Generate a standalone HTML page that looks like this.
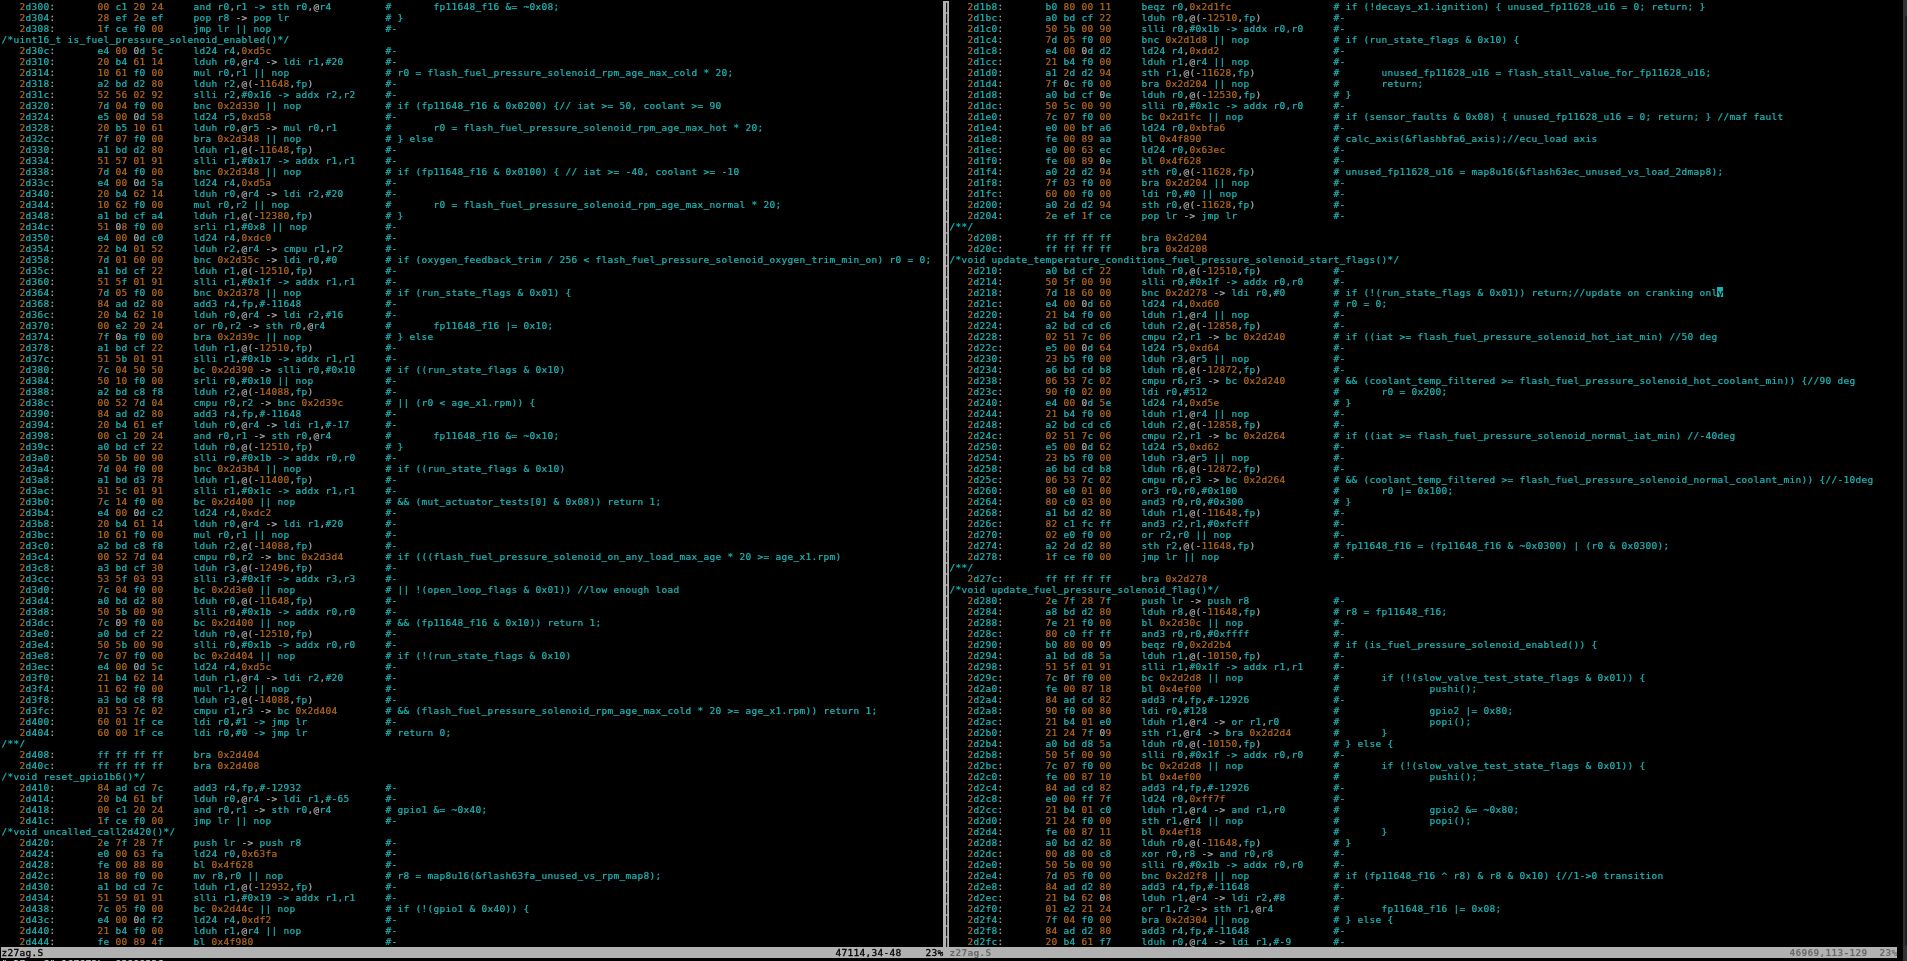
<!DOCTYPE html>
<html><head><meta charset="utf-8"><title>z27ag.S - vim</title>
<style>
html,body{margin:0;padding:0;background:#000;}
body{width:1907px;height:961px;overflow:hidden;position:relative;
 font-family:"DejaVu Sans Mono","Liberation Mono",monospace;font-size:9.5000px;letter-spacing:0.2805px;line-height:11px;color:#b2b2b2;}
.l{-webkit-text-stroke:0.2px currentColor;position:absolute;height:11px;white-space:pre;margin-left:0.5px;margin-top:0.0px}
i{font-style:normal}
.c{color:#19b9b9}.o{color:#b76b19}.g{color:#ababab}
.cur{color:#000}
.cb{position:absolute;width:6px;height:10px;background:#18b2b2}
.sep{position:absolute;left:943px;top:1px;width:6px;height:946px;background:#b2b2b2;color:#000}
.st{position:absolute;top:947px;height:11px;background:#b2b2b2;}
.st .l{top:0;color:#000;-webkit-text-stroke:0.3px #000}
.sep .l{-webkit-text-stroke:0.3px #000;margin-left:0.65px}
.st2 .l{color:#686868;font-weight:bold;-webkit-text-stroke:0}
.edge{position:absolute;left:1903px;top:0;width:4px;height:961px;background:#323232}
.thumb{position:absolute;left:1905px;top:16px;width:4px;height:930px;background:#1f1f1f;border-radius:2px}
#w{position:absolute;left:0;top:0;width:1907px;height:961px;will-change:transform}
</style></head><body><div id="w">
<div class="l" style="left:19px;top:1px"><i class="o">2</i><i class="c">d300</i><i class="g">:</i></div>
<div class="l" style="left:97px;top:1px"><i class="o">00 </i><i class="c">c1 </i><i class="o">20 24</i></div>
<div class="l" style="left:193px;top:1px"><i class="c">and r0</i><i class="g">,</i><i class="c">r1 -&gt; sth r0</i><i class="g">,@</i><i class="c">r4</i></div>
<div class="l" style="left:385px;top:1px"><i class="c">#       fp11648_f16 &amp;= ~0x08;</i></div>
<div class="l" style="left:19px;top:12px"><i class="o">2</i><i class="c">d304</i><i class="g">:</i></div>
<div class="l" style="left:97px;top:12px"><i class="o">28 </i><i class="c">ef </i><i class="o">2</i><i class="c">e ef</i></div>
<div class="l" style="left:193px;top:12px"><i class="c">pop r8 </i><i class="g">-&gt; </i><i class="c">pop lr</i></div>
<div class="l" style="left:385px;top:12px"><i class="c"># }</i></div>
<div class="l" style="left:19px;top:23px"><i class="o">2</i><i class="c">d308</i><i class="g">:</i></div>
<div class="l" style="left:97px;top:23px"><i class="o">1</i><i class="c">f ce f0 </i><i class="o">00</i></div>
<div class="l" style="left:193px;top:23px"><i class="c">jmp lr || nop</i></div>
<div class="l" style="left:385px;top:23px"><i class="c">#-</i></div>
<div class="l" style="left:1px;top:34px"><i class="c">/*uint16_t is_fuel_pressure_solenoid_enabled()*/</i></div>
<div class="l" style="left:19px;top:45px"><i class="o">2</i><i class="c">d30c</i><i class="g">:</i></div>
<div class="l" style="left:97px;top:45px"><i class="c">e4 </i><i class="o">00 </i><i class="g">0</i><i class="c">d </i><i class="o">5</i><i class="c">c</i></div>
<div class="l" style="left:193px;top:45px"><i class="c">ld24 r4</i><i class="g">,</i><i class="o">0xd5c</i></div>
<div class="l" style="left:385px;top:45px"><i class="c">#-</i></div>
<div class="l" style="left:19px;top:56px"><i class="o">2</i><i class="c">d310</i><i class="g">:</i></div>
<div class="l" style="left:97px;top:56px"><i class="o">20 </i><i class="c">b4 </i><i class="o">61 14</i></div>
<div class="l" style="left:193px;top:56px"><i class="c">lduh r0</i><i class="g">,@</i><i class="c">r4 </i><i class="g">-&gt; </i><i class="c">ldi r1</i><i class="g">,</i><i class="c">#20</i></div>
<div class="l" style="left:385px;top:56px"><i class="c">#-</i></div>
<div class="l" style="left:19px;top:67px"><i class="o">2</i><i class="c">d314</i><i class="g">:</i></div>
<div class="l" style="left:97px;top:67px"><i class="o">10 61 </i><i class="c">f0 </i><i class="o">00</i></div>
<div class="l" style="left:193px;top:67px"><i class="c">mul r0</i><i class="g">,</i><i class="c">r1 || nop</i></div>
<div class="l" style="left:385px;top:67px"><i class="c"># r0 = flash_fuel_pressure_solenoid_rpm_age_max_cold * 20;</i></div>
<div class="l" style="left:19px;top:78px"><i class="o">2</i><i class="c">d318</i><i class="g">:</i></div>
<div class="l" style="left:97px;top:78px"><i class="c">a2 bd d2 </i><i class="o">80</i></div>
<div class="l" style="left:193px;top:78px"><i class="c">lduh r2</i><i class="g">,@(-</i><i class="o">11648</i><i class="g">,</i><i class="c">fp</i><i class="g">)</i></div>
<div class="l" style="left:385px;top:78px"><i class="c">#-</i></div>
<div class="l" style="left:19px;top:89px"><i class="o">2</i><i class="c">d31c</i><i class="g">:</i></div>
<div class="l" style="left:97px;top:89px"><i class="o">52 56 02 92</i></div>
<div class="l" style="left:193px;top:89px"><i class="c">slli r2</i><i class="g">,</i><i class="c">#0x16 -&gt; addx r2,r2</i></div>
<div class="l" style="left:385px;top:89px"><i class="c">#-</i></div>
<div class="l" style="left:19px;top:100px"><i class="o">2</i><i class="c">d320</i><i class="g">:</i></div>
<div class="l" style="left:97px;top:100px"><i class="o">7</i><i class="c">d </i><i class="o">04 </i><i class="c">f0 </i><i class="o">00</i></div>
<div class="l" style="left:193px;top:100px"><i class="c">bnc </i><i class="o">0x2d330 </i><i class="c">|| nop</i></div>
<div class="l" style="left:385px;top:100px"><i class="c"># if (fp11648_f16 &amp; 0x0200) {// iat &gt;= 50, coolant &gt;= 90</i></div>
<div class="l" style="left:19px;top:111px"><i class="o">2</i><i class="c">d324</i><i class="g">:</i></div>
<div class="l" style="left:97px;top:111px"><i class="c">e5 </i><i class="o">00 </i><i class="g">0</i><i class="c">d </i><i class="o">58</i></div>
<div class="l" style="left:193px;top:111px"><i class="c">ld24 r5</i><i class="g">,</i><i class="o">0xd58</i></div>
<div class="l" style="left:385px;top:111px"><i class="c">#-</i></div>
<div class="l" style="left:19px;top:122px"><i class="o">2</i><i class="c">d328</i><i class="g">:</i></div>
<div class="l" style="left:97px;top:122px"><i class="o">20 </i><i class="c">b5 </i><i class="o">10 61</i></div>
<div class="l" style="left:193px;top:122px"><i class="c">lduh r0</i><i class="g">,@</i><i class="c">r5 </i><i class="g">-&gt; </i><i class="c">mul r0</i><i class="g">,</i><i class="c">r1</i></div>
<div class="l" style="left:385px;top:122px"><i class="c">#       r0 = flash_fuel_pressure_solenoid_rpm_age_max_hot * 20;</i></div>
<div class="l" style="left:19px;top:133px"><i class="o">2</i><i class="c">d32c</i><i class="g">:</i></div>
<div class="l" style="left:97px;top:133px"><i class="o">7</i><i class="c">f </i><i class="o">07 </i><i class="c">f0 </i><i class="o">00</i></div>
<div class="l" style="left:193px;top:133px"><i class="c">bra </i><i class="o">0x2d348 </i><i class="c">|| nop</i></div>
<div class="l" style="left:385px;top:133px"><i class="c"># } else</i></div>
<div class="l" style="left:19px;top:144px"><i class="o">2</i><i class="c">d330</i><i class="g">:</i></div>
<div class="l" style="left:97px;top:144px"><i class="c">a1 bd d2 </i><i class="o">80</i></div>
<div class="l" style="left:193px;top:144px"><i class="c">lduh r1</i><i class="g">,@(-</i><i class="o">11648</i><i class="g">,</i><i class="c">fp</i><i class="g">)</i></div>
<div class="l" style="left:385px;top:144px"><i class="c">#-</i></div>
<div class="l" style="left:19px;top:155px"><i class="o">2</i><i class="c">d334</i><i class="g">:</i></div>
<div class="l" style="left:97px;top:155px"><i class="o">51 57 01 91</i></div>
<div class="l" style="left:193px;top:155px"><i class="c">slli r1</i><i class="g">,</i><i class="c">#0x17 -&gt; addx r1,r1</i></div>
<div class="l" style="left:385px;top:155px"><i class="c">#-</i></div>
<div class="l" style="left:19px;top:166px"><i class="o">2</i><i class="c">d338</i><i class="g">:</i></div>
<div class="l" style="left:97px;top:166px"><i class="o">7</i><i class="c">d </i><i class="o">04 </i><i class="c">f0 </i><i class="o">00</i></div>
<div class="l" style="left:193px;top:166px"><i class="c">bnc </i><i class="o">0x2d348 </i><i class="c">|| nop</i></div>
<div class="l" style="left:385px;top:166px"><i class="c"># if (fp11648_f16 &amp; 0x0100) { // iat &gt;= -40, coolant &gt;= -10</i></div>
<div class="l" style="left:19px;top:177px"><i class="o">2</i><i class="c">d33c</i><i class="g">:</i></div>
<div class="l" style="left:97px;top:177px"><i class="c">e4 </i><i class="o">00 </i><i class="g">0</i><i class="c">d </i><i class="o">5</i><i class="c">a</i></div>
<div class="l" style="left:193px;top:177px"><i class="c">ld24 r4</i><i class="g">,</i><i class="o">0xd5a</i></div>
<div class="l" style="left:385px;top:177px"><i class="c">#-</i></div>
<div class="l" style="left:19px;top:188px"><i class="o">2</i><i class="c">d340</i><i class="g">:</i></div>
<div class="l" style="left:97px;top:188px"><i class="o">20 </i><i class="c">b4 </i><i class="o">62 14</i></div>
<div class="l" style="left:193px;top:188px"><i class="c">lduh r0</i><i class="g">,@</i><i class="c">r4 </i><i class="g">-&gt; </i><i class="c">ldi r2</i><i class="g">,</i><i class="c">#20</i></div>
<div class="l" style="left:385px;top:188px"><i class="c">#-</i></div>
<div class="l" style="left:19px;top:199px"><i class="o">2</i><i class="c">d344</i><i class="g">:</i></div>
<div class="l" style="left:97px;top:199px"><i class="o">10 62 </i><i class="c">f0 </i><i class="o">00</i></div>
<div class="l" style="left:193px;top:199px"><i class="c">mul r0</i><i class="g">,</i><i class="c">r2 || nop</i></div>
<div class="l" style="left:385px;top:199px"><i class="c">#       r0 = flash_fuel_pressure_solenoid_rpm_age_max_normal * 20;</i></div>
<div class="l" style="left:19px;top:210px"><i class="o">2</i><i class="c">d348</i><i class="g">:</i></div>
<div class="l" style="left:97px;top:210px"><i class="c">a1 bd cf a4</i></div>
<div class="l" style="left:193px;top:210px"><i class="c">lduh r1</i><i class="g">,@(-</i><i class="o">12380</i><i class="g">,</i><i class="c">fp</i><i class="g">)</i></div>
<div class="l" style="left:385px;top:210px"><i class="c"># }</i></div>
<div class="l" style="left:19px;top:221px"><i class="o">2</i><i class="c">d34c</i><i class="g">:</i></div>
<div class="l" style="left:97px;top:221px"><i class="o">51 </i><i class="g">0</i><i class="o">8 </i><i class="c">f0 </i><i class="o">00</i></div>
<div class="l" style="left:193px;top:221px"><i class="c">srli r1</i><i class="g">,</i><i class="c">#0x8 || nop</i></div>
<div class="l" style="left:385px;top:221px"><i class="c">#-</i></div>
<div class="l" style="left:19px;top:232px"><i class="o">2</i><i class="c">d350</i><i class="g">:</i></div>
<div class="l" style="left:97px;top:232px"><i class="c">e4 </i><i class="o">00 </i><i class="g">0</i><i class="c">d c0</i></div>
<div class="l" style="left:193px;top:232px"><i class="c">ld24 r4</i><i class="g">,</i><i class="o">0xdc0</i></div>
<div class="l" style="left:385px;top:232px"><i class="c">#-</i></div>
<div class="l" style="left:19px;top:243px"><i class="o">2</i><i class="c">d354</i><i class="g">:</i></div>
<div class="l" style="left:97px;top:243px"><i class="o">22 </i><i class="c">b4 </i><i class="o">01 52</i></div>
<div class="l" style="left:193px;top:243px"><i class="c">lduh r2</i><i class="g">,@</i><i class="c">r4 </i><i class="g">-&gt; </i><i class="c">cmpu r1</i><i class="g">,</i><i class="c">r2</i></div>
<div class="l" style="left:385px;top:243px"><i class="c">#-</i></div>
<div class="l" style="left:19px;top:254px"><i class="o">2</i><i class="c">d358</i><i class="g">:</i></div>
<div class="l" style="left:97px;top:254px"><i class="o">7</i><i class="c">d </i><i class="o">01 60 00</i></div>
<div class="l" style="left:193px;top:254px"><i class="c">bnc </i><i class="o">0x2d35c </i><i class="g">-&gt; </i><i class="c">ldi r0</i><i class="g">,</i><i class="c">#0</i></div>
<div class="l" style="left:385px;top:254px"><i class="c"># if (oxygen_feedback_trim / 256 &lt; flash_fuel_pressure_solenoid_oxygen_trim_min_on) r0 = 0;</i></div>
<div class="l" style="left:19px;top:265px"><i class="o">2</i><i class="c">d35c</i><i class="g">:</i></div>
<div class="l" style="left:97px;top:265px"><i class="c">a1 bd cf </i><i class="o">22</i></div>
<div class="l" style="left:193px;top:265px"><i class="c">lduh r1</i><i class="g">,@(-</i><i class="o">12510</i><i class="g">,</i><i class="c">fp</i><i class="g">)</i></div>
<div class="l" style="left:385px;top:265px"><i class="c">#-</i></div>
<div class="l" style="left:19px;top:276px"><i class="o">2</i><i class="c">d360</i><i class="g">:</i></div>
<div class="l" style="left:97px;top:276px"><i class="o">51 5</i><i class="c">f </i><i class="o">01 91</i></div>
<div class="l" style="left:193px;top:276px"><i class="c">slli r1</i><i class="g">,</i><i class="c">#0x1f -&gt; addx r1,r1</i></div>
<div class="l" style="left:385px;top:276px"><i class="c">#-</i></div>
<div class="l" style="left:19px;top:287px"><i class="o">2</i><i class="c">d364</i><i class="g">:</i></div>
<div class="l" style="left:97px;top:287px"><i class="o">7</i><i class="c">d </i><i class="o">05 </i><i class="c">f0 </i><i class="o">00</i></div>
<div class="l" style="left:193px;top:287px"><i class="c">bnc </i><i class="o">0x2d378 </i><i class="c">|| nop</i></div>
<div class="l" style="left:385px;top:287px"><i class="c"># if (run_state_flags &amp; 0x01) {</i></div>
<div class="l" style="left:19px;top:298px"><i class="o">2</i><i class="c">d368</i><i class="g">:</i></div>
<div class="l" style="left:97px;top:298px"><i class="o">84 </i><i class="c">ad d2 </i><i class="o">80</i></div>
<div class="l" style="left:193px;top:298px"><i class="c">add3 r4</i><i class="g">,</i><i class="c">fp</i><i class="g">,</i><i class="c">#-11648</i></div>
<div class="l" style="left:385px;top:298px"><i class="c">#-</i></div>
<div class="l" style="left:19px;top:309px"><i class="o">2</i><i class="c">d36c</i><i class="g">:</i></div>
<div class="l" style="left:97px;top:309px"><i class="o">20 </i><i class="c">b4 </i><i class="o">62 10</i></div>
<div class="l" style="left:193px;top:309px"><i class="c">lduh r0</i><i class="g">,@</i><i class="c">r4 </i><i class="g">-&gt; </i><i class="c">ldi r2</i><i class="g">,</i><i class="c">#16</i></div>
<div class="l" style="left:385px;top:309px"><i class="c">#-</i></div>
<div class="l" style="left:19px;top:320px"><i class="o">2</i><i class="c">d370</i><i class="g">:</i></div>
<div class="l" style="left:97px;top:320px"><i class="o">00 </i><i class="c">e2 </i><i class="o">20 24</i></div>
<div class="l" style="left:193px;top:320px"><i class="c">or r0</i><i class="g">,</i><i class="c">r2 </i><i class="g">-&gt; </i><i class="c">sth r0</i><i class="g">,@</i><i class="c">r4</i></div>
<div class="l" style="left:385px;top:320px"><i class="c">#       fp11648_f16 |= 0x10;</i></div>
<div class="l" style="left:19px;top:331px"><i class="o">2</i><i class="c">d374</i><i class="g">:</i></div>
<div class="l" style="left:97px;top:331px"><i class="o">7</i><i class="c">f </i><i class="g">0</i><i class="c">a f0 </i><i class="o">00</i></div>
<div class="l" style="left:193px;top:331px"><i class="c">bra </i><i class="o">0x2d39c </i><i class="c">|| nop</i></div>
<div class="l" style="left:385px;top:331px"><i class="c"># } else</i></div>
<div class="l" style="left:19px;top:342px"><i class="o">2</i><i class="c">d378</i><i class="g">:</i></div>
<div class="l" style="left:97px;top:342px"><i class="c">a1 bd cf </i><i class="o">22</i></div>
<div class="l" style="left:193px;top:342px"><i class="c">lduh r1</i><i class="g">,@(-</i><i class="o">12510</i><i class="g">,</i><i class="c">fp</i><i class="g">)</i></div>
<div class="l" style="left:385px;top:342px"><i class="c">#-</i></div>
<div class="l" style="left:19px;top:353px"><i class="o">2</i><i class="c">d37c</i><i class="g">:</i></div>
<div class="l" style="left:97px;top:353px"><i class="o">51 5</i><i class="c">b </i><i class="o">01 91</i></div>
<div class="l" style="left:193px;top:353px"><i class="c">slli r1</i><i class="g">,</i><i class="c">#0x1b -&gt; addx r1,r1</i></div>
<div class="l" style="left:385px;top:353px"><i class="c">#-</i></div>
<div class="l" style="left:19px;top:364px"><i class="o">2</i><i class="c">d380</i><i class="g">:</i></div>
<div class="l" style="left:97px;top:364px"><i class="o">7</i><i class="c">c </i><i class="o">04 50 50</i></div>
<div class="l" style="left:193px;top:364px"><i class="c">bc </i><i class="o">0x2d390 </i><i class="g">-&gt; </i><i class="c">slli r0</i><i class="g">,</i><i class="c">#0x10</i></div>
<div class="l" style="left:385px;top:364px"><i class="c"># if ((run_state_flags &amp; 0x10)</i></div>
<div class="l" style="left:19px;top:375px"><i class="o">2</i><i class="c">d384</i><i class="g">:</i></div>
<div class="l" style="left:97px;top:375px"><i class="o">50 10 </i><i class="c">f0 </i><i class="o">00</i></div>
<div class="l" style="left:193px;top:375px"><i class="c">srli r0</i><i class="g">,</i><i class="c">#0x10 || nop</i></div>
<div class="l" style="left:385px;top:375px"><i class="c">#-</i></div>
<div class="l" style="left:19px;top:386px"><i class="o">2</i><i class="c">d388</i><i class="g">:</i></div>
<div class="l" style="left:97px;top:386px"><i class="c">a2 bd c8 f8</i></div>
<div class="l" style="left:193px;top:386px"><i class="c">lduh r2</i><i class="g">,@(-</i><i class="o">14088</i><i class="g">,</i><i class="c">fp</i><i class="g">)</i></div>
<div class="l" style="left:385px;top:386px"><i class="c">#-</i></div>
<div class="l" style="left:19px;top:397px"><i class="o">2</i><i class="c">d38c</i><i class="g">:</i></div>
<div class="l" style="left:97px;top:397px"><i class="o">00 52 7</i><i class="c">d </i><i class="o">04</i></div>
<div class="l" style="left:193px;top:397px"><i class="c">cmpu r0</i><i class="g">,</i><i class="c">r2 </i><i class="g">-&gt; </i><i class="c">bnc </i><i class="o">0x2d39c</i></div>
<div class="l" style="left:385px;top:397px"><i class="c"># || (r0 &lt; age_x1.rpm)) {</i></div>
<div class="l" style="left:19px;top:408px"><i class="o">2</i><i class="c">d390</i><i class="g">:</i></div>
<div class="l" style="left:97px;top:408px"><i class="o">84 </i><i class="c">ad d2 </i><i class="o">80</i></div>
<div class="l" style="left:193px;top:408px"><i class="c">add3 r4</i><i class="g">,</i><i class="c">fp</i><i class="g">,</i><i class="c">#-11648</i></div>
<div class="l" style="left:385px;top:408px"><i class="c">#-</i></div>
<div class="l" style="left:19px;top:419px"><i class="o">2</i><i class="c">d394</i><i class="g">:</i></div>
<div class="l" style="left:97px;top:419px"><i class="o">20 </i><i class="c">b4 </i><i class="o">61 </i><i class="c">ef</i></div>
<div class="l" style="left:193px;top:419px"><i class="c">lduh r0</i><i class="g">,@</i><i class="c">r4 </i><i class="g">-&gt; </i><i class="c">ldi r1</i><i class="g">,</i><i class="c">#-17</i></div>
<div class="l" style="left:385px;top:419px"><i class="c">#-</i></div>
<div class="l" style="left:19px;top:430px"><i class="o">2</i><i class="c">d398</i><i class="g">:</i></div>
<div class="l" style="left:97px;top:430px"><i class="o">00 </i><i class="c">c1 </i><i class="o">20 24</i></div>
<div class="l" style="left:193px;top:430px"><i class="c">and r0</i><i class="g">,</i><i class="c">r1 </i><i class="g">-&gt; </i><i class="c">sth r0</i><i class="g">,@</i><i class="c">r4</i></div>
<div class="l" style="left:385px;top:430px"><i class="c">#       fp11648_f16 &amp;= ~0x10;</i></div>
<div class="l" style="left:19px;top:441px"><i class="o">2</i><i class="c">d39c</i><i class="g">:</i></div>
<div class="l" style="left:97px;top:441px"><i class="c">a0 bd cf </i><i class="o">22</i></div>
<div class="l" style="left:193px;top:441px"><i class="c">lduh r0</i><i class="g">,@(-</i><i class="o">12510</i><i class="g">,</i><i class="c">fp</i><i class="g">)</i></div>
<div class="l" style="left:385px;top:441px"><i class="c"># }</i></div>
<div class="l" style="left:19px;top:452px"><i class="o">2</i><i class="c">d3a0</i><i class="g">:</i></div>
<div class="l" style="left:97px;top:452px"><i class="o">50 5</i><i class="c">b </i><i class="o">00 90</i></div>
<div class="l" style="left:193px;top:452px"><i class="c">slli r0</i><i class="g">,</i><i class="c">#0x1b -&gt; addx r0,r0</i></div>
<div class="l" style="left:385px;top:452px"><i class="c">#-</i></div>
<div class="l" style="left:19px;top:463px"><i class="o">2</i><i class="c">d3a4</i><i class="g">:</i></div>
<div class="l" style="left:97px;top:463px"><i class="o">7</i><i class="c">d </i><i class="o">04 </i><i class="c">f0 </i><i class="o">00</i></div>
<div class="l" style="left:193px;top:463px"><i class="c">bnc </i><i class="o">0x2d3b4 </i><i class="c">|| nop</i></div>
<div class="l" style="left:385px;top:463px"><i class="c"># if ((run_state_flags &amp; 0x10)</i></div>
<div class="l" style="left:19px;top:474px"><i class="o">2</i><i class="c">d3a8</i><i class="g">:</i></div>
<div class="l" style="left:97px;top:474px"><i class="c">a1 bd d3 </i><i class="o">78</i></div>
<div class="l" style="left:193px;top:474px"><i class="c">lduh r1</i><i class="g">,@(-</i><i class="o">11400</i><i class="g">,</i><i class="c">fp</i><i class="g">)</i></div>
<div class="l" style="left:385px;top:474px"><i class="c">#-</i></div>
<div class="l" style="left:19px;top:485px"><i class="o">2</i><i class="c">d3ac</i><i class="g">:</i></div>
<div class="l" style="left:97px;top:485px"><i class="o">51 5</i><i class="c">c </i><i class="o">01 91</i></div>
<div class="l" style="left:193px;top:485px"><i class="c">slli r1</i><i class="g">,</i><i class="c">#0x1c -&gt; addx r1,r1</i></div>
<div class="l" style="left:385px;top:485px"><i class="c">#-</i></div>
<div class="l" style="left:19px;top:496px"><i class="o">2</i><i class="c">d3b0</i><i class="g">:</i></div>
<div class="l" style="left:97px;top:496px"><i class="o">7</i><i class="c">c </i><i class="o">14 </i><i class="c">f0 </i><i class="o">00</i></div>
<div class="l" style="left:193px;top:496px"><i class="c">bc </i><i class="o">0x2d400 </i><i class="c">|| nop</i></div>
<div class="l" style="left:385px;top:496px"><i class="c"># &amp;&amp; (mut_actuator_tests[0] &amp; 0x08)) return 1;</i></div>
<div class="l" style="left:19px;top:507px"><i class="o">2</i><i class="c">d3b4</i><i class="g">:</i></div>
<div class="l" style="left:97px;top:507px"><i class="c">e4 </i><i class="o">00 </i><i class="g">0</i><i class="c">d c2</i></div>
<div class="l" style="left:193px;top:507px"><i class="c">ld24 r4</i><i class="g">,</i><i class="o">0xdc2</i></div>
<div class="l" style="left:385px;top:507px"><i class="c">#-</i></div>
<div class="l" style="left:19px;top:518px"><i class="o">2</i><i class="c">d3b8</i><i class="g">:</i></div>
<div class="l" style="left:97px;top:518px"><i class="o">20 </i><i class="c">b4 </i><i class="o">61 14</i></div>
<div class="l" style="left:193px;top:518px"><i class="c">lduh r0</i><i class="g">,@</i><i class="c">r4 </i><i class="g">-&gt; </i><i class="c">ldi r1</i><i class="g">,</i><i class="c">#20</i></div>
<div class="l" style="left:385px;top:518px"><i class="c">#-</i></div>
<div class="l" style="left:19px;top:529px"><i class="o">2</i><i class="c">d3bc</i><i class="g">:</i></div>
<div class="l" style="left:97px;top:529px"><i class="o">10 61 </i><i class="c">f0 </i><i class="o">00</i></div>
<div class="l" style="left:193px;top:529px"><i class="c">mul r0</i><i class="g">,</i><i class="c">r1 || nop</i></div>
<div class="l" style="left:385px;top:529px"><i class="c">#-</i></div>
<div class="l" style="left:19px;top:540px"><i class="o">2</i><i class="c">d3c0</i><i class="g">:</i></div>
<div class="l" style="left:97px;top:540px"><i class="c">a2 bd c8 f8</i></div>
<div class="l" style="left:193px;top:540px"><i class="c">lduh r2</i><i class="g">,@(-</i><i class="o">14088</i><i class="g">,</i><i class="c">fp</i><i class="g">)</i></div>
<div class="l" style="left:385px;top:540px"><i class="c">#-</i></div>
<div class="l" style="left:19px;top:551px"><i class="o">2</i><i class="c">d3c4</i><i class="g">:</i></div>
<div class="l" style="left:97px;top:551px"><i class="o">00 52 7</i><i class="c">d </i><i class="o">04</i></div>
<div class="l" style="left:193px;top:551px"><i class="c">cmpu r0</i><i class="g">,</i><i class="c">r2 </i><i class="g">-&gt; </i><i class="c">bnc </i><i class="o">0x2d3d4</i></div>
<div class="l" style="left:385px;top:551px"><i class="c"># if (((flash_fuel_pressure_solenoid_on_any_load_max_age * 20 &gt;= age_x1.rpm)</i></div>
<div class="l" style="left:19px;top:562px"><i class="o">2</i><i class="c">d3c8</i><i class="g">:</i></div>
<div class="l" style="left:97px;top:562px"><i class="c">a3 bd cf </i><i class="o">30</i></div>
<div class="l" style="left:193px;top:562px"><i class="c">lduh r3</i><i class="g">,@(-</i><i class="o">12496</i><i class="g">,</i><i class="c">fp</i><i class="g">)</i></div>
<div class="l" style="left:385px;top:562px"><i class="c">#-</i></div>
<div class="l" style="left:19px;top:573px"><i class="o">2</i><i class="c">d3cc</i><i class="g">:</i></div>
<div class="l" style="left:97px;top:573px"><i class="o">53 5</i><i class="c">f </i><i class="o">03 93</i></div>
<div class="l" style="left:193px;top:573px"><i class="c">slli r3</i><i class="g">,</i><i class="c">#0x1f -&gt; addx r3,r3</i></div>
<div class="l" style="left:385px;top:573px"><i class="c">#-</i></div>
<div class="l" style="left:19px;top:584px"><i class="o">2</i><i class="c">d3d0</i><i class="g">:</i></div>
<div class="l" style="left:97px;top:584px"><i class="o">7</i><i class="c">c </i><i class="o">04 </i><i class="c">f0 </i><i class="o">00</i></div>
<div class="l" style="left:193px;top:584px"><i class="c">bc </i><i class="o">0x2d3e0 </i><i class="c">|| nop</i></div>
<div class="l" style="left:385px;top:584px"><i class="c"># || !(open_loop_flags &amp; 0x01)) //low enough load</i></div>
<div class="l" style="left:19px;top:595px"><i class="o">2</i><i class="c">d3d4</i><i class="g">:</i></div>
<div class="l" style="left:97px;top:595px"><i class="c">a0 bd d2 </i><i class="o">80</i></div>
<div class="l" style="left:193px;top:595px"><i class="c">lduh r0</i><i class="g">,@(-</i><i class="o">11648</i><i class="g">,</i><i class="c">fp</i><i class="g">)</i></div>
<div class="l" style="left:385px;top:595px"><i class="c">#-</i></div>
<div class="l" style="left:19px;top:606px"><i class="o">2</i><i class="c">d3d8</i><i class="g">:</i></div>
<div class="l" style="left:97px;top:606px"><i class="o">50 5</i><i class="c">b </i><i class="o">00 90</i></div>
<div class="l" style="left:193px;top:606px"><i class="c">slli r0</i><i class="g">,</i><i class="c">#0x1b -&gt; addx r0,r0</i></div>
<div class="l" style="left:385px;top:606px"><i class="c">#-</i></div>
<div class="l" style="left:19px;top:617px"><i class="o">2</i><i class="c">d3dc</i><i class="g">:</i></div>
<div class="l" style="left:97px;top:617px"><i class="o">7</i><i class="c">c </i><i class="g">0</i><i class="o">9 </i><i class="c">f0 </i><i class="o">00</i></div>
<div class="l" style="left:193px;top:617px"><i class="c">bc </i><i class="o">0x2d400 </i><i class="c">|| nop</i></div>
<div class="l" style="left:385px;top:617px"><i class="c"># &amp;&amp; (fp11648_f16 &amp; 0x10)) return 1;</i></div>
<div class="l" style="left:19px;top:628px"><i class="o">2</i><i class="c">d3e0</i><i class="g">:</i></div>
<div class="l" style="left:97px;top:628px"><i class="c">a0 bd cf </i><i class="o">22</i></div>
<div class="l" style="left:193px;top:628px"><i class="c">lduh r0</i><i class="g">,@(-</i><i class="o">12510</i><i class="g">,</i><i class="c">fp</i><i class="g">)</i></div>
<div class="l" style="left:385px;top:628px"><i class="c">#-</i></div>
<div class="l" style="left:19px;top:639px"><i class="o">2</i><i class="c">d3e4</i><i class="g">:</i></div>
<div class="l" style="left:97px;top:639px"><i class="o">50 5</i><i class="c">b </i><i class="o">00 90</i></div>
<div class="l" style="left:193px;top:639px"><i class="c">slli r0</i><i class="g">,</i><i class="c">#0x1b -&gt; addx r0,r0</i></div>
<div class="l" style="left:385px;top:639px"><i class="c">#-</i></div>
<div class="l" style="left:19px;top:650px"><i class="o">2</i><i class="c">d3e8</i><i class="g">:</i></div>
<div class="l" style="left:97px;top:650px"><i class="o">7</i><i class="c">c </i><i class="o">07 </i><i class="c">f0 </i><i class="o">00</i></div>
<div class="l" style="left:193px;top:650px"><i class="c">bc </i><i class="o">0x2d404 </i><i class="c">|| nop</i></div>
<div class="l" style="left:385px;top:650px"><i class="c"># if (!(run_state_flags &amp; 0x10)</i></div>
<div class="l" style="left:19px;top:661px"><i class="o">2</i><i class="c">d3ec</i><i class="g">:</i></div>
<div class="l" style="left:97px;top:661px"><i class="c">e4 </i><i class="o">00 </i><i class="g">0</i><i class="c">d </i><i class="o">5</i><i class="c">c</i></div>
<div class="l" style="left:193px;top:661px"><i class="c">ld24 r4</i><i class="g">,</i><i class="o">0xd5c</i></div>
<div class="l" style="left:385px;top:661px"><i class="c">#-</i></div>
<div class="l" style="left:19px;top:672px"><i class="o">2</i><i class="c">d3f0</i><i class="g">:</i></div>
<div class="l" style="left:97px;top:672px"><i class="o">21 </i><i class="c">b4 </i><i class="o">62 14</i></div>
<div class="l" style="left:193px;top:672px"><i class="c">lduh r1</i><i class="g">,@</i><i class="c">r4 </i><i class="g">-&gt; </i><i class="c">ldi r2</i><i class="g">,</i><i class="c">#20</i></div>
<div class="l" style="left:385px;top:672px"><i class="c">#-</i></div>
<div class="l" style="left:19px;top:683px"><i class="o">2</i><i class="c">d3f4</i><i class="g">:</i></div>
<div class="l" style="left:97px;top:683px"><i class="o">11 62 </i><i class="c">f0 </i><i class="o">00</i></div>
<div class="l" style="left:193px;top:683px"><i class="c">mul r1</i><i class="g">,</i><i class="c">r2 || nop</i></div>
<div class="l" style="left:385px;top:683px"><i class="c">#-</i></div>
<div class="l" style="left:19px;top:694px"><i class="o">2</i><i class="c">d3f8</i><i class="g">:</i></div>
<div class="l" style="left:97px;top:694px"><i class="c">a3 bd c8 f8</i></div>
<div class="l" style="left:193px;top:694px"><i class="c">lduh r3</i><i class="g">,@(-</i><i class="o">14088</i><i class="g">,</i><i class="c">fp</i><i class="g">)</i></div>
<div class="l" style="left:385px;top:694px"><i class="c">#-</i></div>
<div class="l" style="left:19px;top:705px"><i class="o">2</i><i class="c">d3fc</i><i class="g">:</i></div>
<div class="l" style="left:97px;top:705px"><i class="o">01 53 7</i><i class="c">c </i><i class="o">02</i></div>
<div class="l" style="left:193px;top:705px"><i class="c">cmpu r1</i><i class="g">,</i><i class="c">r3 </i><i class="g">-&gt; </i><i class="c">bc </i><i class="o">0x2d404</i></div>
<div class="l" style="left:385px;top:705px"><i class="c"># &amp;&amp; (flash_fuel_pressure_solenoid_rpm_age_max_cold * 20 &gt;= age_x1.rpm)) return 1;</i></div>
<div class="l" style="left:19px;top:716px"><i class="o">2</i><i class="c">d400</i><i class="g">:</i></div>
<div class="l" style="left:97px;top:716px"><i class="o">60 01 1</i><i class="c">f ce</i></div>
<div class="l" style="left:193px;top:716px"><i class="c">ldi r0</i><i class="g">,</i><i class="c">#1 -&gt; jmp lr</i></div>
<div class="l" style="left:385px;top:716px"><i class="c">#-</i></div>
<div class="l" style="left:19px;top:727px"><i class="o">2</i><i class="c">d404</i><i class="g">:</i></div>
<div class="l" style="left:97px;top:727px"><i class="o">60 00 1</i><i class="c">f ce</i></div>
<div class="l" style="left:193px;top:727px"><i class="c">ldi r0</i><i class="g">,</i><i class="c">#0 -&gt; jmp lr</i></div>
<div class="l" style="left:385px;top:727px"><i class="c"># return 0;</i></div>
<div class="l" style="left:1px;top:738px"><i class="c">/**/</i></div>
<div class="l" style="left:19px;top:749px"><i class="o">2</i><i class="c">d408</i><i class="g">:</i></div>
<div class="l" style="left:97px;top:749px"><i class="c">ff ff ff ff</i></div>
<div class="l" style="left:193px;top:749px"><i class="c">bra </i><i class="o">0x2d404</i></div>
<div class="l" style="left:19px;top:760px"><i class="o">2</i><i class="c">d40c</i><i class="g">:</i></div>
<div class="l" style="left:97px;top:760px"><i class="c">ff ff ff ff</i></div>
<div class="l" style="left:193px;top:760px"><i class="c">bra </i><i class="o">0x2d408</i></div>
<div class="l" style="left:1px;top:771px"><i class="c">/*void reset_gpio1b6()*/</i></div>
<div class="l" style="left:19px;top:782px"><i class="o">2</i><i class="c">d410</i><i class="g">:</i></div>
<div class="l" style="left:97px;top:782px"><i class="o">84 </i><i class="c">ad cd </i><i class="o">7</i><i class="c">c</i></div>
<div class="l" style="left:193px;top:782px"><i class="c">add3 r4</i><i class="g">,</i><i class="c">fp</i><i class="g">,</i><i class="c">#-12932</i></div>
<div class="l" style="left:385px;top:782px"><i class="c">#-</i></div>
<div class="l" style="left:19px;top:793px"><i class="o">2</i><i class="c">d414</i><i class="g">:</i></div>
<div class="l" style="left:97px;top:793px"><i class="o">20 </i><i class="c">b4 </i><i class="o">61 </i><i class="c">bf</i></div>
<div class="l" style="left:193px;top:793px"><i class="c">lduh r0</i><i class="g">,@</i><i class="c">r4 </i><i class="g">-&gt; </i><i class="c">ldi r1</i><i class="g">,</i><i class="c">#-65</i></div>
<div class="l" style="left:385px;top:793px"><i class="c">#-</i></div>
<div class="l" style="left:19px;top:804px"><i class="o">2</i><i class="c">d418</i><i class="g">:</i></div>
<div class="l" style="left:97px;top:804px"><i class="o">00 </i><i class="c">c1 </i><i class="o">20 24</i></div>
<div class="l" style="left:193px;top:804px"><i class="c">and r0</i><i class="g">,</i><i class="c">r1 </i><i class="g">-&gt; </i><i class="c">sth r0</i><i class="g">,@</i><i class="c">r4</i></div>
<div class="l" style="left:385px;top:804px"><i class="c"># gpio1 &amp;= ~0x40;</i></div>
<div class="l" style="left:19px;top:815px"><i class="o">2</i><i class="c">d41c</i><i class="g">:</i></div>
<div class="l" style="left:97px;top:815px"><i class="o">1</i><i class="c">f ce f0 </i><i class="o">00</i></div>
<div class="l" style="left:193px;top:815px"><i class="c">jmp lr || nop</i></div>
<div class="l" style="left:385px;top:815px"><i class="c">#-</i></div>
<div class="l" style="left:1px;top:826px"><i class="c">/*void uncalled_call2d420()*/</i></div>
<div class="l" style="left:19px;top:837px"><i class="o">2</i><i class="c">d420</i><i class="g">:</i></div>
<div class="l" style="left:97px;top:837px"><i class="o">2</i><i class="c">e </i><i class="o">7</i><i class="c">f </i><i class="o">28 7</i><i class="c">f</i></div>
<div class="l" style="left:193px;top:837px"><i class="c">push lr </i><i class="g">-&gt; </i><i class="c">push r8</i></div>
<div class="l" style="left:385px;top:837px"><i class="c">#-</i></div>
<div class="l" style="left:19px;top:848px"><i class="o">2</i><i class="c">d424</i><i class="g">:</i></div>
<div class="l" style="left:97px;top:848px"><i class="c">e0 </i><i class="o">00 63 </i><i class="c">fa</i></div>
<div class="l" style="left:193px;top:848px"><i class="c">ld24 r0</i><i class="g">,</i><i class="o">0x63fa</i></div>
<div class="l" style="left:385px;top:848px"><i class="c">#-</i></div>
<div class="l" style="left:19px;top:859px"><i class="o">2</i><i class="c">d428</i><i class="g">:</i></div>
<div class="l" style="left:97px;top:859px"><i class="c">fe </i><i class="o">00 88 80</i></div>
<div class="l" style="left:193px;top:859px"><i class="c">bl </i><i class="o">0x4f628</i></div>
<div class="l" style="left:385px;top:859px"><i class="c">#-</i></div>
<div class="l" style="left:19px;top:870px"><i class="o">2</i><i class="c">d42c</i><i class="g">:</i></div>
<div class="l" style="left:97px;top:870px"><i class="o">18 80 </i><i class="c">f0 </i><i class="o">00</i></div>
<div class="l" style="left:193px;top:870px"><i class="c">mv r8</i><i class="g">,</i><i class="c">r0 || nop</i></div>
<div class="l" style="left:385px;top:870px"><i class="c"># r8 = map8u16(&amp;flash63fa_unused_vs_rpm_map8);</i></div>
<div class="l" style="left:19px;top:881px"><i class="o">2</i><i class="c">d430</i><i class="g">:</i></div>
<div class="l" style="left:97px;top:881px"><i class="c">a1 bd cd </i><i class="o">7</i><i class="c">c</i></div>
<div class="l" style="left:193px;top:881px"><i class="c">lduh r1</i><i class="g">,@(-</i><i class="o">12932</i><i class="g">,</i><i class="c">fp</i><i class="g">)</i></div>
<div class="l" style="left:385px;top:881px"><i class="c">#-</i></div>
<div class="l" style="left:19px;top:892px"><i class="o">2</i><i class="c">d434</i><i class="g">:</i></div>
<div class="l" style="left:97px;top:892px"><i class="o">51 59 01 91</i></div>
<div class="l" style="left:193px;top:892px"><i class="c">slli r1</i><i class="g">,</i><i class="c">#0x19 -&gt; addx r1,r1</i></div>
<div class="l" style="left:385px;top:892px"><i class="c">#-</i></div>
<div class="l" style="left:19px;top:903px"><i class="o">2</i><i class="c">d438</i><i class="g">:</i></div>
<div class="l" style="left:97px;top:903px"><i class="o">7</i><i class="c">c </i><i class="o">05 </i><i class="c">f0 </i><i class="o">00</i></div>
<div class="l" style="left:193px;top:903px"><i class="c">bc </i><i class="o">0x2d44c </i><i class="c">|| nop</i></div>
<div class="l" style="left:385px;top:903px"><i class="c"># if (!(gpio1 &amp; 0x40)) {</i></div>
<div class="l" style="left:19px;top:914px"><i class="o">2</i><i class="c">d43c</i><i class="g">:</i></div>
<div class="l" style="left:97px;top:914px"><i class="c">e4 </i><i class="o">00 </i><i class="g">0</i><i class="c">d f2</i></div>
<div class="l" style="left:193px;top:914px"><i class="c">ld24 r4</i><i class="g">,</i><i class="o">0xdf2</i></div>
<div class="l" style="left:385px;top:914px"><i class="c">#-</i></div>
<div class="l" style="left:19px;top:925px"><i class="o">2</i><i class="c">d440</i><i class="g">:</i></div>
<div class="l" style="left:97px;top:925px"><i class="o">21 </i><i class="c">b4 f0 </i><i class="o">00</i></div>
<div class="l" style="left:193px;top:925px"><i class="c">lduh r1</i><i class="g">,@</i><i class="c">r4 || nop</i></div>
<div class="l" style="left:385px;top:925px"><i class="c">#-</i></div>
<div class="l" style="left:19px;top:936px"><i class="o">2</i><i class="c">d444</i><i class="g">:</i></div>
<div class="l" style="left:97px;top:936px"><i class="c">fe </i><i class="o">00 89 4</i><i class="c">f</i></div>
<div class="l" style="left:193px;top:936px"><i class="c">bl </i><i class="o">0x4f980</i></div>
<div class="l" style="left:385px;top:936px"><i class="c">#-</i></div>
<div class="sep"><div class="l" style="left:0;top:0px">|</div><div class="l" style="left:0;top:11px">|</div><div class="l" style="left:0;top:22px">|</div><div class="l" style="left:0;top:33px">|</div><div class="l" style="left:0;top:44px">|</div><div class="l" style="left:0;top:55px">|</div><div class="l" style="left:0;top:66px">|</div><div class="l" style="left:0;top:77px">|</div><div class="l" style="left:0;top:88px">|</div><div class="l" style="left:0;top:99px">|</div><div class="l" style="left:0;top:110px">|</div><div class="l" style="left:0;top:121px">|</div><div class="l" style="left:0;top:132px">|</div><div class="l" style="left:0;top:143px">|</div><div class="l" style="left:0;top:154px">|</div><div class="l" style="left:0;top:165px">|</div><div class="l" style="left:0;top:176px">|</div><div class="l" style="left:0;top:187px">|</div><div class="l" style="left:0;top:198px">|</div><div class="l" style="left:0;top:209px">|</div><div class="l" style="left:0;top:220px">|</div><div class="l" style="left:0;top:231px">|</div><div class="l" style="left:0;top:242px">|</div><div class="l" style="left:0;top:253px">|</div><div class="l" style="left:0;top:264px">|</div><div class="l" style="left:0;top:275px">|</div><div class="l" style="left:0;top:286px">|</div><div class="l" style="left:0;top:297px">|</div><div class="l" style="left:0;top:308px">|</div><div class="l" style="left:0;top:319px">|</div><div class="l" style="left:0;top:330px">|</div><div class="l" style="left:0;top:341px">|</div><div class="l" style="left:0;top:352px">|</div><div class="l" style="left:0;top:363px">|</div><div class="l" style="left:0;top:374px">|</div><div class="l" style="left:0;top:385px">|</div><div class="l" style="left:0;top:396px">|</div><div class="l" style="left:0;top:407px">|</div><div class="l" style="left:0;top:418px">|</div><div class="l" style="left:0;top:429px">|</div><div class="l" style="left:0;top:440px">|</div><div class="l" style="left:0;top:451px">|</div><div class="l" style="left:0;top:462px">|</div><div class="l" style="left:0;top:473px">|</div><div class="l" style="left:0;top:484px">|</div><div class="l" style="left:0;top:495px">|</div><div class="l" style="left:0;top:506px">|</div><div class="l" style="left:0;top:517px">|</div><div class="l" style="left:0;top:528px">|</div><div class="l" style="left:0;top:539px">|</div><div class="l" style="left:0;top:550px">|</div><div class="l" style="left:0;top:561px">|</div><div class="l" style="left:0;top:572px">|</div><div class="l" style="left:0;top:583px">|</div><div class="l" style="left:0;top:594px">|</div><div class="l" style="left:0;top:605px">|</div><div class="l" style="left:0;top:616px">|</div><div class="l" style="left:0;top:627px">|</div><div class="l" style="left:0;top:638px">|</div><div class="l" style="left:0;top:649px">|</div><div class="l" style="left:0;top:660px">|</div><div class="l" style="left:0;top:671px">|</div><div class="l" style="left:0;top:682px">|</div><div class="l" style="left:0;top:693px">|</div><div class="l" style="left:0;top:704px">|</div><div class="l" style="left:0;top:715px">|</div><div class="l" style="left:0;top:726px">|</div><div class="l" style="left:0;top:737px">|</div><div class="l" style="left:0;top:748px">|</div><div class="l" style="left:0;top:759px">|</div><div class="l" style="left:0;top:770px">|</div><div class="l" style="left:0;top:781px">|</div><div class="l" style="left:0;top:792px">|</div><div class="l" style="left:0;top:803px">|</div><div class="l" style="left:0;top:814px">|</div><div class="l" style="left:0;top:825px">|</div><div class="l" style="left:0;top:836px">|</div><div class="l" style="left:0;top:847px">|</div><div class="l" style="left:0;top:858px">|</div><div class="l" style="left:0;top:869px">|</div><div class="l" style="left:0;top:880px">|</div><div class="l" style="left:0;top:891px">|</div><div class="l" style="left:0;top:902px">|</div><div class="l" style="left:0;top:913px">|</div><div class="l" style="left:0;top:924px">|</div><div class="l" style="left:0;top:935px">|</div></div>
<div class="cb" style="left:1717px;top:287px"></div>
<div class="l" style="left:967px;top:1px"><i class="o">2</i><i class="c">d1b8</i><i class="g">:</i></div>
<div class="l" style="left:1045px;top:1px"><i class="c">b0 </i><i class="o">80 00 11</i></div>
<div class="l" style="left:1141px;top:1px"><i class="c">beqz r0</i><i class="g">,</i><i class="o">0x2d1fc</i></div>
<div class="l" style="left:1333px;top:1px"><i class="c"># if (!decays_x1.ignition) { unused_fp11628_u16 = 0; return; }</i></div>
<div class="l" style="left:967px;top:12px"><i class="o">2</i><i class="c">d1bc</i><i class="g">:</i></div>
<div class="l" style="left:1045px;top:12px"><i class="c">a0 bd cf </i><i class="o">22</i></div>
<div class="l" style="left:1141px;top:12px"><i class="c">lduh r0</i><i class="g">,@(-</i><i class="o">12510</i><i class="g">,</i><i class="c">fp</i><i class="g">)</i></div>
<div class="l" style="left:1333px;top:12px"><i class="c">#-</i></div>
<div class="l" style="left:967px;top:23px"><i class="o">2</i><i class="c">d1c0</i><i class="g">:</i></div>
<div class="l" style="left:1045px;top:23px"><i class="o">50 5</i><i class="c">b </i><i class="o">00 90</i></div>
<div class="l" style="left:1141px;top:23px"><i class="c">slli r0</i><i class="g">,</i><i class="c">#0x1b -&gt; addx r0,r0</i></div>
<div class="l" style="left:1333px;top:23px"><i class="c">#-</i></div>
<div class="l" style="left:967px;top:34px"><i class="o">2</i><i class="c">d1c4</i><i class="g">:</i></div>
<div class="l" style="left:1045px;top:34px"><i class="o">7</i><i class="c">d </i><i class="o">05 </i><i class="c">f0 </i><i class="o">00</i></div>
<div class="l" style="left:1141px;top:34px"><i class="c">bnc </i><i class="o">0x2d1d8 </i><i class="c">|| nop</i></div>
<div class="l" style="left:1333px;top:34px"><i class="c"># if (run_state_flags &amp; 0x10) {</i></div>
<div class="l" style="left:967px;top:45px"><i class="o">2</i><i class="c">d1c8</i><i class="g">:</i></div>
<div class="l" style="left:1045px;top:45px"><i class="c">e4 </i><i class="o">00 </i><i class="g">0</i><i class="c">d d2</i></div>
<div class="l" style="left:1141px;top:45px"><i class="c">ld24 r4</i><i class="g">,</i><i class="o">0xdd2</i></div>
<div class="l" style="left:1333px;top:45px"><i class="c">#-</i></div>
<div class="l" style="left:967px;top:56px"><i class="o">2</i><i class="c">d1cc</i><i class="g">:</i></div>
<div class="l" style="left:1045px;top:56px"><i class="o">21 </i><i class="c">b4 f0 </i><i class="o">00</i></div>
<div class="l" style="left:1141px;top:56px"><i class="c">lduh r1</i><i class="g">,@</i><i class="c">r4 || nop</i></div>
<div class="l" style="left:1333px;top:56px"><i class="c">#-</i></div>
<div class="l" style="left:967px;top:67px"><i class="o">2</i><i class="c">d1d0</i><i class="g">:</i></div>
<div class="l" style="left:1045px;top:67px"><i class="c">a1 </i><i class="o">2</i><i class="c">d d2 </i><i class="o">94</i></div>
<div class="l" style="left:1141px;top:67px"><i class="c">sth r1</i><i class="g">,@(-</i><i class="o">11628</i><i class="g">,</i><i class="c">fp</i><i class="g">)</i></div>
<div class="l" style="left:1333px;top:67px"><i class="c">#       unused_fp11628_u16 = flash_stall_value_for_fp11628_u16;</i></div>
<div class="l" style="left:967px;top:78px"><i class="o">2</i><i class="c">d1d4</i><i class="g">:</i></div>
<div class="l" style="left:1045px;top:78px"><i class="o">7</i><i class="c">f </i><i class="g">0</i><i class="c">c f0 </i><i class="o">00</i></div>
<div class="l" style="left:1141px;top:78px"><i class="c">bra </i><i class="o">0x2d204 </i><i class="c">|| nop</i></div>
<div class="l" style="left:1333px;top:78px"><i class="c">#       return;</i></div>
<div class="l" style="left:967px;top:89px"><i class="o">2</i><i class="c">d1d8</i><i class="g">:</i></div>
<div class="l" style="left:1045px;top:89px"><i class="c">a0 bd cf </i><i class="g">0</i><i class="c">e</i></div>
<div class="l" style="left:1141px;top:89px"><i class="c">lduh r0</i><i class="g">,@(-</i><i class="o">12530</i><i class="g">,</i><i class="c">fp</i><i class="g">)</i></div>
<div class="l" style="left:1333px;top:89px"><i class="c"># }</i></div>
<div class="l" style="left:967px;top:100px"><i class="o">2</i><i class="c">d1dc</i><i class="g">:</i></div>
<div class="l" style="left:1045px;top:100px"><i class="o">50 5</i><i class="c">c </i><i class="o">00 90</i></div>
<div class="l" style="left:1141px;top:100px"><i class="c">slli r0</i><i class="g">,</i><i class="c">#0x1c -&gt; addx r0,r0</i></div>
<div class="l" style="left:1333px;top:100px"><i class="c">#-</i></div>
<div class="l" style="left:967px;top:111px"><i class="o">2</i><i class="c">d1e0</i><i class="g">:</i></div>
<div class="l" style="left:1045px;top:111px"><i class="o">7</i><i class="c">c </i><i class="o">07 </i><i class="c">f0 </i><i class="o">00</i></div>
<div class="l" style="left:1141px;top:111px"><i class="c">bc </i><i class="o">0x2d1fc </i><i class="c">|| nop</i></div>
<div class="l" style="left:1333px;top:111px"><i class="c"># if (sensor_faults &amp; 0x08) { unused_fp11628_u16 = 0; return; } //maf fault</i></div>
<div class="l" style="left:967px;top:122px"><i class="o">2</i><i class="c">d1e4</i><i class="g">:</i></div>
<div class="l" style="left:1045px;top:122px"><i class="c">e0 </i><i class="o">00 </i><i class="c">bf a6</i></div>
<div class="l" style="left:1141px;top:122px"><i class="c">ld24 r0</i><i class="g">,</i><i class="o">0xbfa6</i></div>
<div class="l" style="left:1333px;top:122px"><i class="c">#-</i></div>
<div class="l" style="left:967px;top:133px"><i class="o">2</i><i class="c">d1e8</i><i class="g">:</i></div>
<div class="l" style="left:1045px;top:133px"><i class="c">fe </i><i class="o">00 89 </i><i class="c">aa</i></div>
<div class="l" style="left:1141px;top:133px"><i class="c">bl </i><i class="o">0x4f890</i></div>
<div class="l" style="left:1333px;top:133px"><i class="c"># calc_axis(&amp;flashbfa6_axis);//ecu_load axis</i></div>
<div class="l" style="left:967px;top:144px"><i class="o">2</i><i class="c">d1ec</i><i class="g">:</i></div>
<div class="l" style="left:1045px;top:144px"><i class="c">e0 </i><i class="o">00 63 </i><i class="c">ec</i></div>
<div class="l" style="left:1141px;top:144px"><i class="c">ld24 r0</i><i class="g">,</i><i class="o">0x63ec</i></div>
<div class="l" style="left:1333px;top:144px"><i class="c">#-</i></div>
<div class="l" style="left:967px;top:155px"><i class="o">2</i><i class="c">d1f0</i><i class="g">:</i></div>
<div class="l" style="left:1045px;top:155px"><i class="c">fe </i><i class="o">00 89 </i><i class="g">0</i><i class="c">e</i></div>
<div class="l" style="left:1141px;top:155px"><i class="c">bl </i><i class="o">0x4f628</i></div>
<div class="l" style="left:1333px;top:155px"><i class="c">#-</i></div>
<div class="l" style="left:967px;top:166px"><i class="o">2</i><i class="c">d1f4</i><i class="g">:</i></div>
<div class="l" style="left:1045px;top:166px"><i class="c">a0 </i><i class="o">2</i><i class="c">d d2 </i><i class="o">94</i></div>
<div class="l" style="left:1141px;top:166px"><i class="c">sth r0</i><i class="g">,@(-</i><i class="o">11628</i><i class="g">,</i><i class="c">fp</i><i class="g">)</i></div>
<div class="l" style="left:1333px;top:166px"><i class="c"># unused_fp11628_u16 = map8u16(&amp;flash63ec_unused_vs_load_2dmap8);</i></div>
<div class="l" style="left:967px;top:177px"><i class="o">2</i><i class="c">d1f8</i><i class="g">:</i></div>
<div class="l" style="left:1045px;top:177px"><i class="o">7</i><i class="c">f </i><i class="o">03 </i><i class="c">f0 </i><i class="o">00</i></div>
<div class="l" style="left:1141px;top:177px"><i class="c">bra </i><i class="o">0x2d204 </i><i class="c">|| nop</i></div>
<div class="l" style="left:1333px;top:177px"><i class="c">#-</i></div>
<div class="l" style="left:967px;top:188px"><i class="o">2</i><i class="c">d1fc</i><i class="g">:</i></div>
<div class="l" style="left:1045px;top:188px"><i class="o">60 00 </i><i class="c">f0 </i><i class="o">00</i></div>
<div class="l" style="left:1141px;top:188px"><i class="c">ldi r0</i><i class="g">,</i><i class="c">#0 || nop</i></div>
<div class="l" style="left:1333px;top:188px"><i class="c">#-</i></div>
<div class="l" style="left:967px;top:199px"><i class="o">2</i><i class="c">d200</i><i class="g">:</i></div>
<div class="l" style="left:1045px;top:199px"><i class="c">a0 </i><i class="o">2</i><i class="c">d d2 </i><i class="o">94</i></div>
<div class="l" style="left:1141px;top:199px"><i class="c">sth r0</i><i class="g">,@(-</i><i class="o">11628</i><i class="g">,</i><i class="c">fp</i><i class="g">)</i></div>
<div class="l" style="left:1333px;top:199px"><i class="c">#-</i></div>
<div class="l" style="left:967px;top:210px"><i class="o">2</i><i class="c">d204</i><i class="g">:</i></div>
<div class="l" style="left:1045px;top:210px"><i class="o">2</i><i class="c">e ef </i><i class="o">1</i><i class="c">f ce</i></div>
<div class="l" style="left:1141px;top:210px"><i class="c">pop lr </i><i class="g">-&gt; </i><i class="c">jmp lr</i></div>
<div class="l" style="left:1333px;top:210px"><i class="c">#-</i></div>
<div class="l" style="left:949px;top:221px"><i class="c">/**/</i></div>
<div class="l" style="left:967px;top:232px"><i class="o">2</i><i class="c">d208</i><i class="g">:</i></div>
<div class="l" style="left:1045px;top:232px"><i class="c">ff ff ff ff</i></div>
<div class="l" style="left:1141px;top:232px"><i class="c">bra </i><i class="o">0x2d204</i></div>
<div class="l" style="left:967px;top:243px"><i class="o">2</i><i class="c">d20c</i><i class="g">:</i></div>
<div class="l" style="left:1045px;top:243px"><i class="c">ff ff ff ff</i></div>
<div class="l" style="left:1141px;top:243px"><i class="c">bra </i><i class="o">0x2d208</i></div>
<div class="l" style="left:949px;top:254px"><i class="c">/*void update_temperature_conditions_fuel_pressure_solenoid_start_flags()*/</i></div>
<div class="l" style="left:967px;top:265px"><i class="o">2</i><i class="c">d210</i><i class="g">:</i></div>
<div class="l" style="left:1045px;top:265px"><i class="c">a0 bd cf </i><i class="o">22</i></div>
<div class="l" style="left:1141px;top:265px"><i class="c">lduh r0</i><i class="g">,@(-</i><i class="o">12510</i><i class="g">,</i><i class="c">fp</i><i class="g">)</i></div>
<div class="l" style="left:1333px;top:265px"><i class="c">#-</i></div>
<div class="l" style="left:967px;top:276px"><i class="o">2</i><i class="c">d214</i><i class="g">:</i></div>
<div class="l" style="left:1045px;top:276px"><i class="o">50 5</i><i class="c">f </i><i class="o">00 90</i></div>
<div class="l" style="left:1141px;top:276px"><i class="c">slli r0</i><i class="g">,</i><i class="c">#0x1f -&gt; addx r0,r0</i></div>
<div class="l" style="left:1333px;top:276px"><i class="c">#-</i></div>
<div class="l" style="left:967px;top:287px"><i class="o">2</i><i class="c">d218</i><i class="g">:</i></div>
<div class="l" style="left:1045px;top:287px"><i class="o">7</i><i class="c">d </i><i class="o">18 60 00</i></div>
<div class="l" style="left:1141px;top:287px"><i class="c">bnc </i><i class="o">0x2d278 </i><i class="g">-&gt; </i><i class="c">ldi r0</i><i class="g">,</i><i class="c">#0</i></div>
<div class="l" style="left:1333px;top:287px"><i class="c"># if (!(run_state_flags &amp; 0x01)) return;//update on cranking onl</i><i class="cur">y</i></div>
<div class="l" style="left:967px;top:298px"><i class="o">2</i><i class="c">d21c</i><i class="g">:</i></div>
<div class="l" style="left:1045px;top:298px"><i class="c">e4 </i><i class="o">00 </i><i class="g">0</i><i class="c">d </i><i class="o">60</i></div>
<div class="l" style="left:1141px;top:298px"><i class="c">ld24 r4</i><i class="g">,</i><i class="o">0xd60</i></div>
<div class="l" style="left:1333px;top:298px"><i class="c"># r0 = 0;</i></div>
<div class="l" style="left:967px;top:309px"><i class="o">2</i><i class="c">d220</i><i class="g">:</i></div>
<div class="l" style="left:1045px;top:309px"><i class="o">21 </i><i class="c">b4 f0 </i><i class="o">00</i></div>
<div class="l" style="left:1141px;top:309px"><i class="c">lduh r1</i><i class="g">,@</i><i class="c">r4 || nop</i></div>
<div class="l" style="left:1333px;top:309px"><i class="c">#-</i></div>
<div class="l" style="left:967px;top:320px"><i class="o">2</i><i class="c">d224</i><i class="g">:</i></div>
<div class="l" style="left:1045px;top:320px"><i class="c">a2 bd cd c6</i></div>
<div class="l" style="left:1141px;top:320px"><i class="c">lduh r2</i><i class="g">,@(-</i><i class="o">12858</i><i class="g">,</i><i class="c">fp</i><i class="g">)</i></div>
<div class="l" style="left:1333px;top:320px"><i class="c">#-</i></div>
<div class="l" style="left:967px;top:331px"><i class="o">2</i><i class="c">d228</i><i class="g">:</i></div>
<div class="l" style="left:1045px;top:331px"><i class="o">02 51 7</i><i class="c">c </i><i class="o">06</i></div>
<div class="l" style="left:1141px;top:331px"><i class="c">cmpu r2</i><i class="g">,</i><i class="c">r1 </i><i class="g">-&gt; </i><i class="c">bc </i><i class="o">0x2d240</i></div>
<div class="l" style="left:1333px;top:331px"><i class="c"># if ((iat &gt;= flash_fuel_pressure_solenoid_hot_iat_min) //50 deg</i></div>
<div class="l" style="left:967px;top:342px"><i class="o">2</i><i class="c">d22c</i><i class="g">:</i></div>
<div class="l" style="left:1045px;top:342px"><i class="c">e5 </i><i class="o">00 </i><i class="g">0</i><i class="c">d </i><i class="o">64</i></div>
<div class="l" style="left:1141px;top:342px"><i class="c">ld24 r5</i><i class="g">,</i><i class="o">0xd64</i></div>
<div class="l" style="left:1333px;top:342px"><i class="c">#-</i></div>
<div class="l" style="left:967px;top:353px"><i class="o">2</i><i class="c">d230</i><i class="g">:</i></div>
<div class="l" style="left:1045px;top:353px"><i class="o">23 </i><i class="c">b5 f0 </i><i class="o">00</i></div>
<div class="l" style="left:1141px;top:353px"><i class="c">lduh r3</i><i class="g">,@</i><i class="c">r5 || nop</i></div>
<div class="l" style="left:1333px;top:353px"><i class="c">#-</i></div>
<div class="l" style="left:967px;top:364px"><i class="o">2</i><i class="c">d234</i><i class="g">:</i></div>
<div class="l" style="left:1045px;top:364px"><i class="c">a6 bd cd b8</i></div>
<div class="l" style="left:1141px;top:364px"><i class="c">lduh r6</i><i class="g">,@(-</i><i class="o">12872</i><i class="g">,</i><i class="c">fp</i><i class="g">)</i></div>
<div class="l" style="left:1333px;top:364px"><i class="c">#-</i></div>
<div class="l" style="left:967px;top:375px"><i class="o">2</i><i class="c">d238</i><i class="g">:</i></div>
<div class="l" style="left:1045px;top:375px"><i class="o">06 53 7</i><i class="c">c </i><i class="o">02</i></div>
<div class="l" style="left:1141px;top:375px"><i class="c">cmpu r6</i><i class="g">,</i><i class="c">r3 </i><i class="g">-&gt; </i><i class="c">bc </i><i class="o">0x2d240</i></div>
<div class="l" style="left:1333px;top:375px"><i class="c"># &amp;&amp; (coolant_temp_filtered &gt;= flash_fuel_pressure_solenoid_hot_coolant_min)) {//90 deg</i></div>
<div class="l" style="left:967px;top:386px"><i class="o">2</i><i class="c">d23c</i><i class="g">:</i></div>
<div class="l" style="left:1045px;top:386px"><i class="o">90 </i><i class="c">f0 </i><i class="o">02 00</i></div>
<div class="l" style="left:1141px;top:386px"><i class="c">ldi r0</i><i class="g">,</i><i class="c">#512</i></div>
<div class="l" style="left:1333px;top:386px"><i class="c">#       r0 = 0x200;</i></div>
<div class="l" style="left:967px;top:397px"><i class="o">2</i><i class="c">d240</i><i class="g">:</i></div>
<div class="l" style="left:1045px;top:397px"><i class="c">e4 </i><i class="o">00 </i><i class="g">0</i><i class="c">d </i><i class="o">5</i><i class="c">e</i></div>
<div class="l" style="left:1141px;top:397px"><i class="c">ld24 r4</i><i class="g">,</i><i class="o">0xd5e</i></div>
<div class="l" style="left:1333px;top:397px"><i class="c"># }</i></div>
<div class="l" style="left:967px;top:408px"><i class="o">2</i><i class="c">d244</i><i class="g">:</i></div>
<div class="l" style="left:1045px;top:408px"><i class="o">21 </i><i class="c">b4 f0 </i><i class="o">00</i></div>
<div class="l" style="left:1141px;top:408px"><i class="c">lduh r1</i><i class="g">,@</i><i class="c">r4 || nop</i></div>
<div class="l" style="left:1333px;top:408px"><i class="c">#-</i></div>
<div class="l" style="left:967px;top:419px"><i class="o">2</i><i class="c">d248</i><i class="g">:</i></div>
<div class="l" style="left:1045px;top:419px"><i class="c">a2 bd cd c6</i></div>
<div class="l" style="left:1141px;top:419px"><i class="c">lduh r2</i><i class="g">,@(-</i><i class="o">12858</i><i class="g">,</i><i class="c">fp</i><i class="g">)</i></div>
<div class="l" style="left:1333px;top:419px"><i class="c">#-</i></div>
<div class="l" style="left:967px;top:430px"><i class="o">2</i><i class="c">d24c</i><i class="g">:</i></div>
<div class="l" style="left:1045px;top:430px"><i class="o">02 51 7</i><i class="c">c </i><i class="o">06</i></div>
<div class="l" style="left:1141px;top:430px"><i class="c">cmpu r2</i><i class="g">,</i><i class="c">r1 </i><i class="g">-&gt; </i><i class="c">bc </i><i class="o">0x2d264</i></div>
<div class="l" style="left:1333px;top:430px"><i class="c"># if ((iat &gt;= flash_fuel_pressure_solenoid_normal_iat_min) //-40deg</i></div>
<div class="l" style="left:967px;top:441px"><i class="o">2</i><i class="c">d250</i><i class="g">:</i></div>
<div class="l" style="left:1045px;top:441px"><i class="c">e5 </i><i class="o">00 </i><i class="g">0</i><i class="c">d </i><i class="o">62</i></div>
<div class="l" style="left:1141px;top:441px"><i class="c">ld24 r5</i><i class="g">,</i><i class="o">0xd62</i></div>
<div class="l" style="left:1333px;top:441px"><i class="c">#-</i></div>
<div class="l" style="left:967px;top:452px"><i class="o">2</i><i class="c">d254</i><i class="g">:</i></div>
<div class="l" style="left:1045px;top:452px"><i class="o">23 </i><i class="c">b5 f0 </i><i class="o">00</i></div>
<div class="l" style="left:1141px;top:452px"><i class="c">lduh r3</i><i class="g">,@</i><i class="c">r5 || nop</i></div>
<div class="l" style="left:1333px;top:452px"><i class="c">#-</i></div>
<div class="l" style="left:967px;top:463px"><i class="o">2</i><i class="c">d258</i><i class="g">:</i></div>
<div class="l" style="left:1045px;top:463px"><i class="c">a6 bd cd b8</i></div>
<div class="l" style="left:1141px;top:463px"><i class="c">lduh r6</i><i class="g">,@(-</i><i class="o">12872</i><i class="g">,</i><i class="c">fp</i><i class="g">)</i></div>
<div class="l" style="left:1333px;top:463px"><i class="c">#-</i></div>
<div class="l" style="left:967px;top:474px"><i class="o">2</i><i class="c">d25c</i><i class="g">:</i></div>
<div class="l" style="left:1045px;top:474px"><i class="o">06 53 7</i><i class="c">c </i><i class="o">02</i></div>
<div class="l" style="left:1141px;top:474px"><i class="c">cmpu r6</i><i class="g">,</i><i class="c">r3 </i><i class="g">-&gt; </i><i class="c">bc </i><i class="o">0x2d264</i></div>
<div class="l" style="left:1333px;top:474px"><i class="c"># &amp;&amp; (coolant_temp_filtered &gt;= flash_fuel_pressure_solenoid_normal_coolant_min)) {//-10deg</i></div>
<div class="l" style="left:967px;top:485px"><i class="o">2</i><i class="c">d260</i><i class="g">:</i></div>
<div class="l" style="left:1045px;top:485px"><i class="o">80 </i><i class="c">e0 </i><i class="o">01 00</i></div>
<div class="l" style="left:1141px;top:485px"><i class="c">or3 r0</i><i class="g">,</i><i class="c">r0</i><i class="g">,</i><i class="c">#0x100</i></div>
<div class="l" style="left:1333px;top:485px"><i class="c">#       r0 |= 0x100;</i></div>
<div class="l" style="left:967px;top:496px"><i class="o">2</i><i class="c">d264</i><i class="g">:</i></div>
<div class="l" style="left:1045px;top:496px"><i class="o">80 </i><i class="c">c0 </i><i class="o">03 00</i></div>
<div class="l" style="left:1141px;top:496px"><i class="c">and3 r0</i><i class="g">,</i><i class="c">r0</i><i class="g">,</i><i class="c">#0x300</i></div>
<div class="l" style="left:1333px;top:496px"><i class="c"># }</i></div>
<div class="l" style="left:967px;top:507px"><i class="o">2</i><i class="c">d268</i><i class="g">:</i></div>
<div class="l" style="left:1045px;top:507px"><i class="c">a1 bd d2 </i><i class="o">80</i></div>
<div class="l" style="left:1141px;top:507px"><i class="c">lduh r1</i><i class="g">,@(-</i><i class="o">11648</i><i class="g">,</i><i class="c">fp</i><i class="g">)</i></div>
<div class="l" style="left:1333px;top:507px"><i class="c">#-</i></div>
<div class="l" style="left:967px;top:518px"><i class="o">2</i><i class="c">d26c</i><i class="g">:</i></div>
<div class="l" style="left:1045px;top:518px"><i class="o">82 </i><i class="c">c1 fc ff</i></div>
<div class="l" style="left:1141px;top:518px"><i class="c">and3 r2</i><i class="g">,</i><i class="c">r1</i><i class="g">,</i><i class="c">#0xfcff</i></div>
<div class="l" style="left:1333px;top:518px"><i class="c">#-</i></div>
<div class="l" style="left:967px;top:529px"><i class="o">2</i><i class="c">d270</i><i class="g">:</i></div>
<div class="l" style="left:1045px;top:529px"><i class="o">02 </i><i class="c">e0 f0 </i><i class="o">00</i></div>
<div class="l" style="left:1141px;top:529px"><i class="c">or r2</i><i class="g">,</i><i class="c">r0 || nop</i></div>
<div class="l" style="left:1333px;top:529px"><i class="c">#-</i></div>
<div class="l" style="left:967px;top:540px"><i class="o">2</i><i class="c">d274</i><i class="g">:</i></div>
<div class="l" style="left:1045px;top:540px"><i class="c">a2 </i><i class="o">2</i><i class="c">d d2 </i><i class="o">80</i></div>
<div class="l" style="left:1141px;top:540px"><i class="c">sth r2</i><i class="g">,@(-</i><i class="o">11648</i><i class="g">,</i><i class="c">fp</i><i class="g">)</i></div>
<div class="l" style="left:1333px;top:540px"><i class="c"># fp11648_f16 = (fp11648_f16 &amp; ~0x0300) | (r0 &amp; 0x0300);</i></div>
<div class="l" style="left:967px;top:551px"><i class="o">2</i><i class="c">d278</i><i class="g">:</i></div>
<div class="l" style="left:1045px;top:551px"><i class="o">1</i><i class="c">f ce f0 </i><i class="o">00</i></div>
<div class="l" style="left:1141px;top:551px"><i class="c">jmp lr || nop</i></div>
<div class="l" style="left:1333px;top:551px"><i class="c">#-</i></div>
<div class="l" style="left:949px;top:562px"><i class="c">/**/</i></div>
<div class="l" style="left:967px;top:573px"><i class="o">2</i><i class="c">d27c</i><i class="g">:</i></div>
<div class="l" style="left:1045px;top:573px"><i class="c">ff ff ff ff</i></div>
<div class="l" style="left:1141px;top:573px"><i class="c">bra </i><i class="o">0x2d278</i></div>
<div class="l" style="left:949px;top:584px"><i class="c">/*void update_fuel_pressure_solenoid_flag()*/</i></div>
<div class="l" style="left:967px;top:595px"><i class="o">2</i><i class="c">d280</i><i class="g">:</i></div>
<div class="l" style="left:1045px;top:595px"><i class="o">2</i><i class="c">e </i><i class="o">7</i><i class="c">f </i><i class="o">28 7</i><i class="c">f</i></div>
<div class="l" style="left:1141px;top:595px"><i class="c">push lr </i><i class="g">-&gt; </i><i class="c">push r8</i></div>
<div class="l" style="left:1333px;top:595px"><i class="c">#-</i></div>
<div class="l" style="left:967px;top:606px"><i class="o">2</i><i class="c">d284</i><i class="g">:</i></div>
<div class="l" style="left:1045px;top:606px"><i class="c">a8 bd d2 </i><i class="o">80</i></div>
<div class="l" style="left:1141px;top:606px"><i class="c">lduh r8</i><i class="g">,@(-</i><i class="o">11648</i><i class="g">,</i><i class="c">fp</i><i class="g">)</i></div>
<div class="l" style="left:1333px;top:606px"><i class="c"># r8 = fp11648_f16;</i></div>
<div class="l" style="left:967px;top:617px"><i class="o">2</i><i class="c">d288</i><i class="g">:</i></div>
<div class="l" style="left:1045px;top:617px"><i class="o">7</i><i class="c">e </i><i class="o">21 </i><i class="c">f0 </i><i class="o">00</i></div>
<div class="l" style="left:1141px;top:617px"><i class="c">bl </i><i class="o">0x2d30c </i><i class="c">|| nop</i></div>
<div class="l" style="left:1333px;top:617px"><i class="c">#-</i></div>
<div class="l" style="left:967px;top:628px"><i class="o">2</i><i class="c">d28c</i><i class="g">:</i></div>
<div class="l" style="left:1045px;top:628px"><i class="o">80 </i><i class="c">c0 ff ff</i></div>
<div class="l" style="left:1141px;top:628px"><i class="c">and3 r0</i><i class="g">,</i><i class="c">r0</i><i class="g">,</i><i class="c">#0xffff</i></div>
<div class="l" style="left:1333px;top:628px"><i class="c">#-</i></div>
<div class="l" style="left:967px;top:639px"><i class="o">2</i><i class="c">d290</i><i class="g">:</i></div>
<div class="l" style="left:1045px;top:639px"><i class="c">b0 </i><i class="o">80 00 </i><i class="g">0</i><i class="o">9</i></div>
<div class="l" style="left:1141px;top:639px"><i class="c">beqz r0</i><i class="g">,</i><i class="o">0x2d2b4</i></div>
<div class="l" style="left:1333px;top:639px"><i class="c"># if (is_fuel_pressure_solenoid_enabled()) {</i></div>
<div class="l" style="left:967px;top:650px"><i class="o">2</i><i class="c">d294</i><i class="g">:</i></div>
<div class="l" style="left:1045px;top:650px"><i class="c">a1 bd d8 </i><i class="o">5</i><i class="c">a</i></div>
<div class="l" style="left:1141px;top:650px"><i class="c">lduh r1</i><i class="g">,@(-</i><i class="o">10150</i><i class="g">,</i><i class="c">fp</i><i class="g">)</i></div>
<div class="l" style="left:1333px;top:650px"><i class="c">#-</i></div>
<div class="l" style="left:967px;top:661px"><i class="o">2</i><i class="c">d298</i><i class="g">:</i></div>
<div class="l" style="left:1045px;top:661px"><i class="o">51 5</i><i class="c">f </i><i class="o">01 91</i></div>
<div class="l" style="left:1141px;top:661px"><i class="c">slli r1</i><i class="g">,</i><i class="c">#0x1f -&gt; addx r1,r1</i></div>
<div class="l" style="left:1333px;top:661px"><i class="c">#-</i></div>
<div class="l" style="left:967px;top:672px"><i class="o">2</i><i class="c">d29c</i><i class="g">:</i></div>
<div class="l" style="left:1045px;top:672px"><i class="o">7</i><i class="c">c </i><i class="g">0</i><i class="c">f f0 </i><i class="o">00</i></div>
<div class="l" style="left:1141px;top:672px"><i class="c">bc </i><i class="o">0x2d2d8 </i><i class="c">|| nop</i></div>
<div class="l" style="left:1333px;top:672px"><i class="c">#       if (!(slow_valve_test_state_flags &amp; 0x01)) {</i></div>
<div class="l" style="left:967px;top:683px"><i class="o">2</i><i class="c">d2a0</i><i class="g">:</i></div>
<div class="l" style="left:1045px;top:683px"><i class="c">fe </i><i class="o">00 87 18</i></div>
<div class="l" style="left:1141px;top:683px"><i class="c">bl </i><i class="o">0x4ef00</i></div>
<div class="l" style="left:1333px;top:683px"><i class="c">#               pushi();</i></div>
<div class="l" style="left:967px;top:694px"><i class="o">2</i><i class="c">d2a4</i><i class="g">:</i></div>
<div class="l" style="left:1045px;top:694px"><i class="o">84 </i><i class="c">ad cd </i><i class="o">82</i></div>
<div class="l" style="left:1141px;top:694px"><i class="c">add3 r4</i><i class="g">,</i><i class="c">fp</i><i class="g">,</i><i class="c">#-12926</i></div>
<div class="l" style="left:1333px;top:694px"><i class="c">#-</i></div>
<div class="l" style="left:967px;top:705px"><i class="o">2</i><i class="c">d2a8</i><i class="g">:</i></div>
<div class="l" style="left:1045px;top:705px"><i class="o">90 </i><i class="c">f0 </i><i class="o">00 80</i></div>
<div class="l" style="left:1141px;top:705px"><i class="c">ldi r0</i><i class="g">,</i><i class="c">#128</i></div>
<div class="l" style="left:1333px;top:705px"><i class="c">#               gpio2 |= 0x80;</i></div>
<div class="l" style="left:967px;top:716px"><i class="o">2</i><i class="c">d2ac</i><i class="g">:</i></div>
<div class="l" style="left:1045px;top:716px"><i class="o">21 </i><i class="c">b4 </i><i class="o">01 </i><i class="c">e0</i></div>
<div class="l" style="left:1141px;top:716px"><i class="c">lduh r1</i><i class="g">,@</i><i class="c">r4 </i><i class="g">-&gt; </i><i class="c">or r1</i><i class="g">,</i><i class="c">r0</i></div>
<div class="l" style="left:1333px;top:716px"><i class="c">#               popi();</i></div>
<div class="l" style="left:967px;top:727px"><i class="o">2</i><i class="c">d2b0</i><i class="g">:</i></div>
<div class="l" style="left:1045px;top:727px"><i class="o">21 24 7</i><i class="c">f </i><i class="g">0</i><i class="o">9</i></div>
<div class="l" style="left:1141px;top:727px"><i class="c">sth r1</i><i class="g">,@</i><i class="c">r4 </i><i class="g">-&gt; </i><i class="c">bra </i><i class="o">0x2d2d4</i></div>
<div class="l" style="left:1333px;top:727px"><i class="c">#       }</i></div>
<div class="l" style="left:967px;top:738px"><i class="o">2</i><i class="c">d2b4</i><i class="g">:</i></div>
<div class="l" style="left:1045px;top:738px"><i class="c">a0 bd d8 </i><i class="o">5</i><i class="c">a</i></div>
<div class="l" style="left:1141px;top:738px"><i class="c">lduh r0</i><i class="g">,@(-</i><i class="o">10150</i><i class="g">,</i><i class="c">fp</i><i class="g">)</i></div>
<div class="l" style="left:1333px;top:738px"><i class="c"># } else {</i></div>
<div class="l" style="left:967px;top:749px"><i class="o">2</i><i class="c">d2b8</i><i class="g">:</i></div>
<div class="l" style="left:1045px;top:749px"><i class="o">50 5</i><i class="c">f </i><i class="o">00 90</i></div>
<div class="l" style="left:1141px;top:749px"><i class="c">slli r0</i><i class="g">,</i><i class="c">#0x1f -&gt; addx r0,r0</i></div>
<div class="l" style="left:1333px;top:749px"><i class="c">#-</i></div>
<div class="l" style="left:967px;top:760px"><i class="o">2</i><i class="c">d2bc</i><i class="g">:</i></div>
<div class="l" style="left:1045px;top:760px"><i class="o">7</i><i class="c">c </i><i class="o">07 </i><i class="c">f0 </i><i class="o">00</i></div>
<div class="l" style="left:1141px;top:760px"><i class="c">bc </i><i class="o">0x2d2d8 </i><i class="c">|| nop</i></div>
<div class="l" style="left:1333px;top:760px"><i class="c">#       if (!(slow_valve_test_state_flags &amp; 0x01)) {</i></div>
<div class="l" style="left:967px;top:771px"><i class="o">2</i><i class="c">d2c0</i><i class="g">:</i></div>
<div class="l" style="left:1045px;top:771px"><i class="c">fe </i><i class="o">00 87 10</i></div>
<div class="l" style="left:1141px;top:771px"><i class="c">bl </i><i class="o">0x4ef00</i></div>
<div class="l" style="left:1333px;top:771px"><i class="c">#               pushi();</i></div>
<div class="l" style="left:967px;top:782px"><i class="o">2</i><i class="c">d2c4</i><i class="g">:</i></div>
<div class="l" style="left:1045px;top:782px"><i class="o">84 </i><i class="c">ad cd </i><i class="o">82</i></div>
<div class="l" style="left:1141px;top:782px"><i class="c">add3 r4</i><i class="g">,</i><i class="c">fp</i><i class="g">,</i><i class="c">#-12926</i></div>
<div class="l" style="left:1333px;top:782px"><i class="c">#-</i></div>
<div class="l" style="left:967px;top:793px"><i class="o">2</i><i class="c">d2c8</i><i class="g">:</i></div>
<div class="l" style="left:1045px;top:793px"><i class="c">e0 </i><i class="o">00 </i><i class="c">ff </i><i class="o">7</i><i class="c">f</i></div>
<div class="l" style="left:1141px;top:793px"><i class="c">ld24 r0</i><i class="g">,</i><i class="o">0xff7f</i></div>
<div class="l" style="left:1333px;top:793px"><i class="c">#-</i></div>
<div class="l" style="left:967px;top:804px"><i class="o">2</i><i class="c">d2cc</i><i class="g">:</i></div>
<div class="l" style="left:1045px;top:804px"><i class="o">21 </i><i class="c">b4 </i><i class="o">01 </i><i class="c">c0</i></div>
<div class="l" style="left:1141px;top:804px"><i class="c">lduh r1</i><i class="g">,@</i><i class="c">r4 </i><i class="g">-&gt; </i><i class="c">and r1</i><i class="g">,</i><i class="c">r0</i></div>
<div class="l" style="left:1333px;top:804px"><i class="c">#               gpio2 &amp;= ~0x80;</i></div>
<div class="l" style="left:967px;top:815px"><i class="o">2</i><i class="c">d2d0</i><i class="g">:</i></div>
<div class="l" style="left:1045px;top:815px"><i class="o">21 24 </i><i class="c">f0 </i><i class="o">00</i></div>
<div class="l" style="left:1141px;top:815px"><i class="c">sth r1</i><i class="g">,@</i><i class="c">r4 || nop</i></div>
<div class="l" style="left:1333px;top:815px"><i class="c">#               popi();</i></div>
<div class="l" style="left:967px;top:826px"><i class="o">2</i><i class="c">d2d4</i><i class="g">:</i></div>
<div class="l" style="left:1045px;top:826px"><i class="c">fe </i><i class="o">00 87 11</i></div>
<div class="l" style="left:1141px;top:826px"><i class="c">bl </i><i class="o">0x4ef18</i></div>
<div class="l" style="left:1333px;top:826px"><i class="c">#       }</i></div>
<div class="l" style="left:967px;top:837px"><i class="o">2</i><i class="c">d2d8</i><i class="g">:</i></div>
<div class="l" style="left:1045px;top:837px"><i class="c">a0 bd d2 </i><i class="o">80</i></div>
<div class="l" style="left:1141px;top:837px"><i class="c">lduh r0</i><i class="g">,@(-</i><i class="o">11648</i><i class="g">,</i><i class="c">fp</i><i class="g">)</i></div>
<div class="l" style="left:1333px;top:837px"><i class="c"># }</i></div>
<div class="l" style="left:967px;top:848px"><i class="o">2</i><i class="c">d2dc</i><i class="g">:</i></div>
<div class="l" style="left:1045px;top:848px"><i class="o">00 </i><i class="c">d8 </i><i class="o">00 </i><i class="c">c8</i></div>
<div class="l" style="left:1141px;top:848px"><i class="c">xor r0</i><i class="g">,</i><i class="c">r8 </i><i class="g">-&gt; </i><i class="c">and r0</i><i class="g">,</i><i class="c">r8</i></div>
<div class="l" style="left:1333px;top:848px"><i class="c">#-</i></div>
<div class="l" style="left:967px;top:859px"><i class="o">2</i><i class="c">d2e0</i><i class="g">:</i></div>
<div class="l" style="left:1045px;top:859px"><i class="o">50 5</i><i class="c">b </i><i class="o">00 90</i></div>
<div class="l" style="left:1141px;top:859px"><i class="c">slli r0</i><i class="g">,</i><i class="c">#0x1b -&gt; addx r0,r0</i></div>
<div class="l" style="left:1333px;top:859px"><i class="c">#-</i></div>
<div class="l" style="left:967px;top:870px"><i class="o">2</i><i class="c">d2e4</i><i class="g">:</i></div>
<div class="l" style="left:1045px;top:870px"><i class="o">7</i><i class="c">d </i><i class="o">05 </i><i class="c">f0 </i><i class="o">00</i></div>
<div class="l" style="left:1141px;top:870px"><i class="c">bnc </i><i class="o">0x2d2f8 </i><i class="c">|| nop</i></div>
<div class="l" style="left:1333px;top:870px"><i class="c"># if (fp11648_f16 ^ r8) &amp; r8 &amp; 0x10) {//1-&gt;0 transition</i></div>
<div class="l" style="left:967px;top:881px"><i class="o">2</i><i class="c">d2e8</i><i class="g">:</i></div>
<div class="l" style="left:1045px;top:881px"><i class="o">84 </i><i class="c">ad d2 </i><i class="o">80</i></div>
<div class="l" style="left:1141px;top:881px"><i class="c">add3 r4</i><i class="g">,</i><i class="c">fp</i><i class="g">,</i><i class="c">#-11648</i></div>
<div class="l" style="left:1333px;top:881px"><i class="c">#-</i></div>
<div class="l" style="left:967px;top:892px"><i class="o">2</i><i class="c">d2ec</i><i class="g">:</i></div>
<div class="l" style="left:1045px;top:892px"><i class="o">21 </i><i class="c">b4 </i><i class="o">62 </i><i class="g">0</i><i class="o">8</i></div>
<div class="l" style="left:1141px;top:892px"><i class="c">lduh r1</i><i class="g">,@</i><i class="c">r4 </i><i class="g">-&gt; </i><i class="c">ldi r2</i><i class="g">,</i><i class="c">#8</i></div>
<div class="l" style="left:1333px;top:892px"><i class="c">#-</i></div>
<div class="l" style="left:967px;top:903px"><i class="o">2</i><i class="c">d2f0</i><i class="g">:</i></div>
<div class="l" style="left:1045px;top:903px"><i class="o">01 </i><i class="c">e2 </i><i class="o">21 24</i></div>
<div class="l" style="left:1141px;top:903px"><i class="c">or r1</i><i class="g">,</i><i class="c">r2 </i><i class="g">-&gt; </i><i class="c">sth r1</i><i class="g">,@</i><i class="c">r4</i></div>
<div class="l" style="left:1333px;top:903px"><i class="c">#       fp11648_f16 |= 0x08;</i></div>
<div class="l" style="left:967px;top:914px"><i class="o">2</i><i class="c">d2f4</i><i class="g">:</i></div>
<div class="l" style="left:1045px;top:914px"><i class="o">7</i><i class="c">f </i><i class="o">04 </i><i class="c">f0 </i><i class="o">00</i></div>
<div class="l" style="left:1141px;top:914px"><i class="c">bra </i><i class="o">0x2d304 </i><i class="c">|| nop</i></div>
<div class="l" style="left:1333px;top:914px"><i class="c"># } else {</i></div>
<div class="l" style="left:967px;top:925px"><i class="o">2</i><i class="c">d2f8</i><i class="g">:</i></div>
<div class="l" style="left:1045px;top:925px"><i class="o">84 </i><i class="c">ad d2 </i><i class="o">80</i></div>
<div class="l" style="left:1141px;top:925px"><i class="c">add3 r4</i><i class="g">,</i><i class="c">fp</i><i class="g">,</i><i class="c">#-11648</i></div>
<div class="l" style="left:1333px;top:925px"><i class="c">#-</i></div>
<div class="l" style="left:967px;top:936px"><i class="o">2</i><i class="c">d2fc</i><i class="g">:</i></div>
<div class="l" style="left:1045px;top:936px"><i class="o">20 </i><i class="c">b4 </i><i class="o">61 </i><i class="c">f7</i></div>
<div class="l" style="left:1141px;top:936px"><i class="c">lduh r0</i><i class="g">,@</i><i class="c">r4 </i><i class="g">-&gt; </i><i class="c">ldi r1</i><i class="g">,</i><i class="c">#-9</i></div>
<div class="l" style="left:1333px;top:936px"><i class="c">#-</i></div>
<div class="st" style="left:1px;width:948px"><div class="l" style="left:0">z27ag.S</div><div class="l" style="left:834px">47114,34-48</div><div class="l" style="left:924px">23%</div></div>
<div class="st st2" style="left:949px;width:948px"><div class="l" style="left:0">z27ag.S</div><div class="l" style="left:840px">46969,113-129</div><div class="l" style="left:930px">23%</div></div>
<div class="l" style="left:1px;top:958px;color:#d4d4d4">"z27ag.S" 167673L, 8599853C</div>
<div class="edge"></div><div class="thumb"></div>
</div></body></html>
